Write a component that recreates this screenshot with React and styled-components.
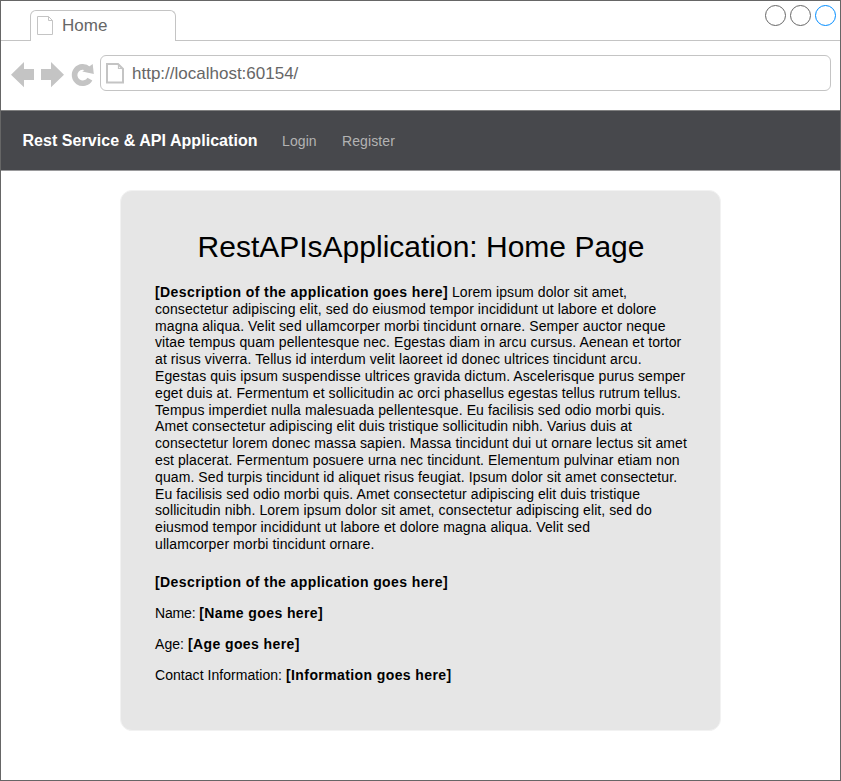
import React from "react";
import styled, { createGlobalStyle } from "styled-components";

const GlobalStyle = createGlobalStyle`
  *, *::before, *::after { box-sizing: border-box; }
  body { margin: 0; background: #fff; }
  body, h1, p { font-family: "Liberation Sans", Arial, Helvetica, sans-serif; }
  h1, p { margin: 0; }
  svg { display: block; flex: none; }
`;

const Window = styled.div`
  width: 841px;
  height: 781px;
  display: flex;
  flex-direction: column;
  border: 1px solid #666;
  background: #fff;
  overflow: hidden;
`;

const TabStrip = styled.header`
  height: 40px;
  flex: none;
  display: flex;
  align-items: flex-end;
`;

const StripLine = styled.div`
  width: ${(p) => p.$width || "auto"};
  flex: ${(p) => (p.$width ? "none" : "1")};
  height: 40px;
  border-bottom: 1px solid #c4c4c4;
`;

const Tab = styled.div`
  width: 146px;
  height: 31px;
  flex: none;
  display: flex;
  align-items: center;
  gap: 8px;
  padding: 0 0 1px 6px;
  border: 1px solid #c4c4c4;
  border-bottom: 0;
  border-radius: 6px 6px 0 0;
  color: #666;
  font-size: 17px;
  line-height: 20px;
`;

const Controls = styled(StripLine)`
  display: flex;
  justify-content: flex-end;
  gap: 4px;
  padding: 4px 4px 0 0;
`;

const Toolbar = styled.div`
  height: 69px;
  flex: none;
  display: flex;
  align-items: flex-start;
  padding: 14px 9px 0 10px;
`;

const NavIcons = styled.div`
  width: 89px;
  padding-top: 7px;
`;

const AddressBar = styled.div`
  flex: 1;
  height: 36px;
  display: flex;
  align-items: center;
  gap: 7px;
  padding-left: 5px;
  border: 1px solid #c4c4c4;
  border-radius: 6px;
  color: #666;
  font-size: 17px;
  line-height: 20px;
`;

const Url = styled.span`
  padding-top: 1px;
`;

const NavBar = styled.nav`
  height: 61px;
  flex: none;
  display: flex;
  align-items: center;
  padding-left: 21.5px;
  border-top: 1px solid #808080;
  border-bottom: 1px solid #9a9a9c;
  background: #47484c;
`;

const Brand = styled.span`
  width: 259.5px;
  color: #fff;
  font-size: 16px;
  font-weight: 700;
  letter-spacing: 0.05px;
`;

const NavLink = styled.a`
  width: 60px;
  color: #b3b3b3;
  font-size: 14px;
  letter-spacing: 0.1px;
`;

const Main = styled.main`
  display: flex;
  justify-content: center;
  padding-top: 19px;
`;

const Card = styled.article`
  width: 601px;
  height: 541px;
  padding: 38px 0 0 34px;
  border: 1px solid #f2f2f2;
  border-radius: 12px;
  background: #e6e6e6;
  color: #000;
`;

const Title = styled.h1`
  padding-right: 33px;
  text-align: center;
  font-size: 30px;
  font-weight: 400;
  line-height: 36px;
`;

const Description = styled.p`
  margin-top: 19px;
  font-size: 14px;
  line-height: 16.8px;
  letter-spacing: 0.09px;
  white-space: pre;
`;

const Placeholder = styled.b`
  letter-spacing: 0.4px;
`;

const Details = styled.div`
  margin-top: 21px;
  display: grid;
  row-gap: 14px;
`;

const Detail = styled.p`
  font-size: 14px;
  line-height: 17px;
`;

const Label = styled.span`
  letter-spacing: ${(p) => p.$tracking}px;
`;

const LINES = [
  " Lorem ipsum dolor sit amet,",
  "consectetur adipiscing elit, sed do eiusmod tempor incididunt ut labore et dolore",
  "magna aliqua. Velit sed ullamcorper morbi tincidunt ornare. Semper auctor neque",
  "vitae tempus quam pellentesque nec. Egestas diam in arcu cursus. Aenean et tortor",
  "at risus viverra. Tellus id interdum velit laoreet id donec ultrices tincidunt arcu.",
  "Egestas quis ipsum suspendisse ultrices gravida dictum. Ascelerisque purus semper",
  "eget duis at. Fermentum et sollicitudin ac orci phasellus egestas tellus rutrum tellus.",
  "Tempus imperdiet nulla malesuada pellentesque. Eu facilisis sed odio morbi quis.",
  "Amet consectetur adipiscing elit duis tristique sollicitudin nibh. Varius duis at",
  "consectetur lorem donec massa sapien. Massa tincidunt dui ut ornare lectus sit amet",
  "est placerat. Fermentum posuere urna nec tincidunt. Elementum pulvinar etiam non",
  "quam. Sed turpis tincidunt id aliquet risus feugiat. Ipsum dolor sit amet consectetur.",
  "Eu facilisis sed odio morbi quis. Amet consectetur adipiscing elit duis tristique",
  "sollicitudin nibh. Lorem ipsum dolor sit amet, consectetur adipiscing elit, sed do",
  "eiusmod tempor incididunt ut labore et dolore magna aliqua. Velit sed",
  "ullamcorper morbi tincidunt ornare.",
].join("\n");

const DETAILS = [
  { value: "[Description of the application goes here]" },
  { label: "Name: ", tracking: -0.15, value: "[Name goes here]" },
  { label: "Age: ", tracking: 0.05, value: "[Age goes here]" },
  { label: "Contact Information: ", tracking: 0.05, value: "[Information goes here]" },
];

const PageIcon = () => (
  <svg width="17" height="20" viewBox="0 0 17 20" fill="none" stroke="#c4c4c4">
    <path d="M.5 .5H11.5L15.5 4.5V18.5H.5ZM11.5 .5V4.5H15.5" />
  </svg>
);

const AddressIcon = () => (
  <svg width="19" height="22" viewBox="0 0 19 22" fill="none" stroke="#c4c4c4">
    <path strokeWidth="2" d="M1 2H12L17 7V20.5H1Z" />
    <path strokeWidth="1.2" d="M12.5 2V6.5H17" />
  </svg>
);

const BrowserArrows = () => (
  <svg width="84" height="26" viewBox="0 0 84 26" fill="#c4c4c4">
    <path d="M0 12.7L13 0V7H23V18H13V25.3Z" />
    <path d="M53 12.7L40 0V7H30V18H40V25.3Z" />
    <path
      fill="none"
      stroke="#c4c4c4"
      strokeWidth="5.6"
      d="M77.5 7.2A8.2 8.2 0 1 0 78.9 17.1"
    />
    <path d="M81.7 2L82.8 12L71.3 9.6Z" />
  </svg>
);

const Circle = ({ color }) => (
  <svg width="21" height="21" viewBox="0 0 21 21" fill="none">
    <circle cx="10.5" cy="10.5" r="10" stroke={color} />
  </svg>
);

export default function App() {
  return (
    <>
      <GlobalStyle />
      <Window>
        <TabStrip>
          <StripLine $width="29px" />
          <Tab>
            <PageIcon />
            Home
          </Tab>
          <Controls>
            <Circle color="#666" />
            <Circle color="#666" />
            <Circle color="#008cff" />
          </Controls>
        </TabStrip>
        <Toolbar>
          <NavIcons>
            <BrowserArrows />
          </NavIcons>
          <AddressBar>
            <AddressIcon />
            <Url>http://localhost:60154/</Url>
          </AddressBar>
        </Toolbar>
        <NavBar>
          <Brand>Rest Service &amp; API Application</Brand>
          <NavLink>Login</NavLink>
          <NavLink>Register</NavLink>
        </NavBar>
        <Main>
          <Card>
            <Title>RestAPIsApplication: Home Page</Title>
            <Description>
              <Placeholder>[Description of the application goes here]</Placeholder>
              {LINES}
            </Description>
            <Details>
              {DETAILS.map(({ label, tracking, value }) => (
                <Detail key={value}>
                  {label && <Label $tracking={tracking}>{label}</Label>}
                  <Placeholder>{value}</Placeholder>
                </Detail>
              ))}
            </Details>
          </Card>
        </Main>
      </Window>
    </>
  );
}
